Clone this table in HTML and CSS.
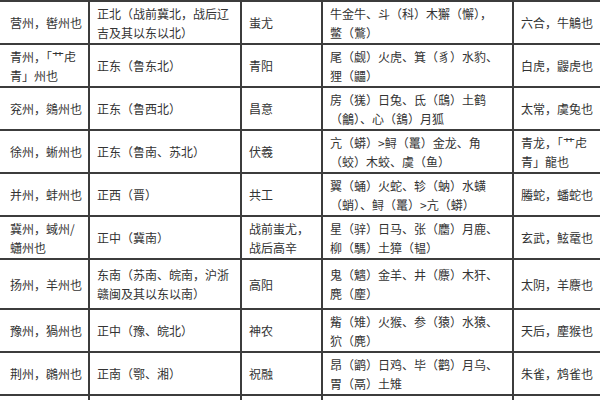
FILE: index.html
```html
<!DOCTYPE html>
<html lang="zh-CN">
<head>
<meta charset="utf-8">
<link rel="stylesheet" href="styles.css">
</head>
<body>
<table class="grid">
  <colgroup>
    <col class="c1"><col class="c2"><col class="c3"><col class="c4"><col class="c5">
  </colgroup>
  <tbody>
    <tr>
      <td>营州，辔州也</td>
      <td>正北（战前冀北，战后辽<br>吉及其以东以北）</td>
      <td>蚩尤</td>
      <td>牛金牛、斗（科）木獬（懈），<br>鳖（鷩）</td>
      <td>六合，牛鵤也</td>
    </tr>
    <tr>
      <td>青州，「艹虍<br>青」州也</td>
      <td>正东（鲁东北）</td>
      <td>青阳</td>
      <td>尾（觑）火虎、箕（豸）水豹、<br>狸（鼺）</td>
      <td>白虎，鼹虎也</td>
    </tr>
    <tr>
      <td>兖州，鵕州也</td>
      <td>正东（鲁西北）</td>
      <td>昌意</td>
      <td>房（獇）日兔、氐（鴟）土鹤<br>（鸙）、心（鵨）月狐</td>
      <td>太常，虞兔也</td>
    </tr>
    <tr>
      <td>徐州，蜥州也</td>
      <td>正东（鲁南、苏北）</td>
      <td>伏羲</td>
      <td>亢（蟒）&gt;鲟（鼍）金龙、角<br>（蛟）木蛟、虞（鱼）</td>
      <td>青龙，「艹虍<br>青」龍也</td>
    </tr>
    <tr>
      <td>并州，蚌州也</td>
      <td>正西（晋）</td>
      <td>共工</td>
      <td>翼（蛹）火蛇、轸（蚋）水蟥<br>（蛸）、鲟（鼍）&gt;亢（蟒）</td>
      <td>螣蛇，蟠蛇也</td>
    </tr>
    <tr>
      <td>冀州，蜮州/<br>蠨州也</td>
      <td>正中（冀南）</td>
      <td>战前蚩尤，<br>战后高辛</td>
      <td>星（骍）日马、张（麕）月鹿、<br>柳（騳）土獐（韫）</td>
      <td>玄武，鮌鼋也</td>
    </tr>
    <tr class="tall">
      <td>扬州，羊州也</td>
      <td>东南（苏南、皖南，沪浙<br>赣闽及其以东以南）</td>
      <td>高阳</td>
      <td>鬼（魑）金羊、井（麖）木犴、<br>麂（麈）</td>
      <td>太阴，羊麖也</td>
    </tr>
    <tr>
      <td>豫州，猧州也</td>
      <td>正中（豫、皖北）</td>
      <td>神农</td>
      <td>觜（雉）火猴、参（猿）水猿、<br>狖（麂）</td>
      <td>天后，麈猴也</td>
    </tr>
    <tr>
      <td>荆州，鸊州也</td>
      <td>正南（鄂、湘）</td>
      <td>祝融</td>
      <td>昂（鹠）日鸡、毕（鹳）月乌、<br>胃（鬲）土雉</td>
      <td>朱雀，鸩雀也</td>
    </tr>
    <tr>
      <td>梁州，狼州也</td>
      <td>西南（川渝、滇黔，陕南<br>及其以西以南）</td>
      <td>颛顼</td>
      <td>娄（狗）金狗、奎（狼）木狼、<br>壁（貐）水貐</td>
      <td>勾陈，狼狗也</td>
    </tr>
  </tbody>
</table>
</body>
</html>
```
FILE: styles.css
```css
html, body {
  margin: 0;
  padding: 0;
  background: #ffffff;
  overflow: hidden;
}

.grid {
  border-collapse: collapse;
  table-layout: fixed;
  width: 623px;
  font-family: "Noto Sans CJK SC", "Noto Sans", sans-serif;
  font-size: 12px;
  line-height: 19px;
  color: #333333;
}

.c1 { width: 89px; }
.c2 { width: 152px; }
.c3 { width: 81px; }
.c4 { width: 191px; }
.c5 { width: 110px; }

.grid td {
  border: 2px solid #3c3c3c;
  height: 41px;
  padding: 0 6px 0 7px;
  vertical-align: middle;
  white-space: nowrap;
  overflow: hidden;
}

.grid tr td:first-child {
  border-left: none;
  padding-left: 10px;
}

.grid tr.tall td {
  height: 48px;
}
```
